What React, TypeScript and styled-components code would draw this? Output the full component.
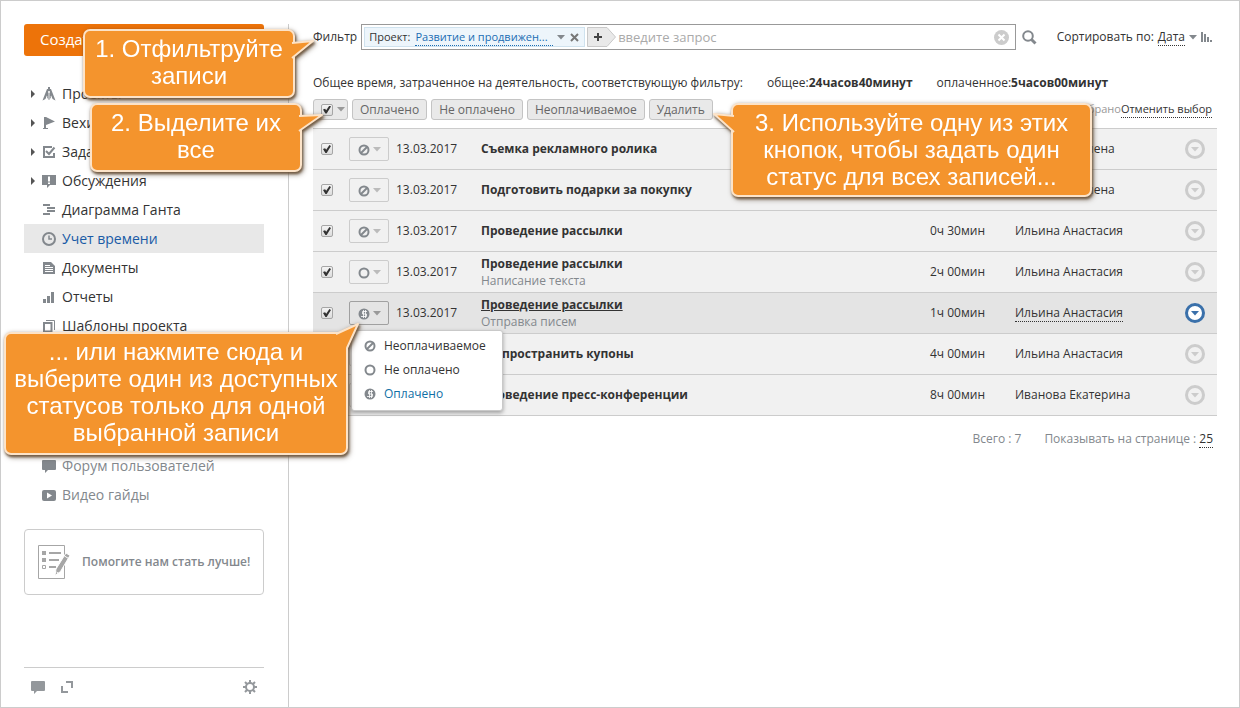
import React from 'react';
import styled, { createGlobalStyle, css } from 'styled-components';

const GlobalStyle = createGlobalStyle`
  *, *::before, *::after { box-sizing: border-box; }
  body {
    margin: 0;
    background: #fff;
    color: #333;
    font: 12px/16px 'Open Sans', sans-serif;
  }
  button, input { font: inherit; color: inherit; }
  button { cursor: pointer; }
  a { color: inherit; text-decoration: none; }
  svg { display: block; flex: none; }
`;

const Page = styled.div`
  position: relative;
  display: flex;
  min-height: 100vh;
  padding-top: 23px;
  border: 1px solid #ccc;
`;

/* ---------- sidebar ---------- */

const Sidebar = styled.aside`
  display: flex;
  flex-direction: column;
  flex: none;
  width: 288px;
  padding: 0 24px 0 23px;
  border-right: 1px solid #ccc;
`;

const CreateButton = styled.button`
  height: 32px;
  padding: 0 16px 2px;
  border: 0;
  border-radius: 3px;
  background: #ed7309;
  color: #fff;
  font-size: 15px;
  text-align: left;
`;

const NavList = styled.ul<{ $gap: number }>`
  margin: ${p => p.$gap}px 0 0;
  padding: 0;
  list-style: none;
`;

const NavLink = styled.a<{ $active?: boolean; $muted?: boolean }>`
  display: grid;
  grid-template-columns: 11px 20px 1fr;
  align-items: center;
  height: 29px;
  padding-left: 7px;
  background: ${p => (p.$active ? '#e8e8e8' : 'transparent')};
  color: ${p => (p.$active ? '#1a5ba6' : p.$muted ? '#83888d' : '#333')};
  font-size: 14px;
  white-space: nowrap;
`;

const HelpCard = styled.a`
  display: flex;
  align-items: center;
  gap: 12px;
  height: 66px;
  margin-top: 20px;
  padding: 0 13px;
  border: 1px solid #ccc;
  border-radius: 4px;
  color: #83888d;
  font-weight: 600;
  white-space: nowrap;
`;

const SideFooter = styled.footer`
  display: flex;
  align-items: center;
  gap: 15px;
  height: 40px;
  margin-top: auto;
  padding: 0 6px 2px 7px;
  border-top: 1px solid #ccc;
`;

const IconButton = styled.button<{ $end?: boolean }>`
  display: block;
  padding: 0;
  border: 0;
  background: none;
  margin-left: ${p => (p.$end ? 'auto' : '0')};
`;

/* ---------- main column ---------- */

const Main = styled.main`
  flex: 1;
  min-width: 0;
  padding: 0 22px 24px 24px;
`;

const FilterRow = styled.div`
  display: flex;
  align-items: center;
  height: 26px;
`;

const FilterBox = styled.div`
  display: flex;
  align-items: center;
  gap: 2px;
  flex: 1;
  height: 26px;
  margin: 0 6px 0 4px;
  padding: 0 6px 0 2px;
  border: 1px solid #999;
`;

const Chip = styled.div`
  display: flex;
  align-items: center;
  gap: 5px;
  width: 221px;
  height: 20px;
  padding: 0 5px 0 4px;
  border: 1px solid #cfe2ee;
  background: #edf5fb;
  font-size: 11px;
  white-space: nowrap;
`;

const ChipValue = styled.button`
  display: flex;
  align-items: center;
  gap: 4px;
  flex: 1;
  padding: 0;
  border: 0;
  background: none;
  color: #1a6db3;
  text-align: left;
`;

const Dotted = styled.span<{ $wide?: boolean }>`
  padding-right: ${p => (p.$wide ? 5 : 0)}px;
  line-height: 16px;
  border-bottom: 1px dotted currentColor;
`;

const SearchInput = styled.input`
  flex: 1;
  min-width: 0;
  padding: 0;
  border: 0;
  outline: 0;
  background: none;
  font-size: 13px;
  &::placeholder { color: #aaa; opacity: 1; }
`;

const SortBox = styled.div`
  display: flex;
  align-items: center;
  gap: 4px;
  margin-left: 20px;
  padding-right: 4px;
  white-space: nowrap;
`;

const TextButton = styled.button`
  padding: 0;
  border: 0;
  border-bottom: 1px dotted #333;
  background: none;
  line-height: 16px;
  white-space: nowrap;
`;

const Summary = styled.p`
  display: flex;
  gap: 24px;
  height: 18px;
  margin: 24px 0 7px;
  line-height: 18px;
  white-space: nowrap;
`;

const Actions = styled.div`
  display: flex;
  align-items: center;
  gap: 4px;
  margin-bottom: 8px;
`;

const buttonFace = css`
  height: 21px;
  border: 1px solid #c4c4c4;
  border-radius: 3px;
  background: #e9e9e9;
`;

const SelectAll = styled.div`
  ${buttonFace}
  display: flex;
  align-items: center;
  gap: 4px;
  width: 35px;
  padding-left: 7px;
`;

const ActionButton = styled.button`
  ${buttonFace}
  padding: 0 7px;
  color: #666;
  line-height: 19px;
  white-space: nowrap;
`;

const Selection = styled.div`
  display: flex;
  margin-left: auto;
  padding-right: 5px;
  color: #999;
  font-size: 11px;
  white-space: nowrap;
  button { color: #333; }
`;

const Check = styled.input`
  display: block;
  appearance: none;
  position: relative;
  flex: none;
  width: 12px;
  height: 12px;
  margin: 0;
  border: 1px solid #a6a6a6;
  border-radius: 2px;
  background: linear-gradient(#f4f4f4, #dcdcdc);
  &:checked::after {
    content: '';
    position: absolute;
    inset: 1px;
    background: #333;
    clip-path: polygon(0 50%, 26% 40%, 40% 58%, 80% 0, 100% 14%, 46% 100%, 30% 100%);
  }
`;

const Table = styled.table`
  width: 100%;
  table-layout: fixed;
  border-spacing: 0;
  border-top: 1px solid #ccc;
`;

const Row = styled.tr<{ $active?: boolean }>`
  background: ${p => (p.$active ? '#e4e4e4' : '#f1f1f1')};
`;

const Cell = styled.td`
  position: relative;
  height: 41px;
  padding: 0;
  border-bottom: 1px solid #ccc;
  vertical-align: middle;
  white-space: nowrap;
`;

const CheckCell = styled(Cell)`
  padding-left: 8px;
`;

const StatusButton = styled.button<{ $active?: boolean }>`
  display: flex;
  align-items: center;
  gap: 3px;
  width: 40px;
  height: 24px;
  padding: 1px 0 0 8px;
  border: 1px solid ${p => (p.$active ? '#a0a0a0' : '#ccc')};
  border-radius: 2px;
  background: transparent;
`;

const Title = styled.a<{ $active?: boolean }>`
  display: block;
  line-height: 16px;
  font-weight: 700;
  text-decoration: ${p => (p.$active ? 'underline' : 'none')};
`;

const Note = styled.div`
  line-height: 17px;
  color: #83888d;
`;

const Menu = styled.ul`
  position: absolute;
  z-index: 2;
  top: 37px;
  left: 2px;
  width: 152px;
  margin: 0;
  padding: 3px 0 4px;
  border: 1px solid #c9c9c9;
  border-radius: 3px;
  background: #fff;
  box-shadow: 0 2px 4px rgba(0, 0, 0, 0.35);
  list-style: none;
`;

const MenuItem = styled.button<{ $active?: boolean }>`
  display: flex;
  align-items: center;
  gap: 8px;
  width: 100%;
  height: 24px;
  padding: 0 12px;
  border: 0;
  background: none;
  color: ${p => (p.$active ? '#116fa6' : '#333')};
`;

const Pager = styled.div`
  display: flex;
  justify-content: flex-end;
  gap: 23px;
  margin-top: 15px;
  padding-right: 4px;
  color: #83888d;
  button { color: #333; }
`;

/* ---------- callouts ---------- */

const Bubble = styled.div<{ $x: number; $y: number; $w: number; $h: number }>`
  position: absolute;
  z-index: 3;
  left: ${p => p.$x}px;
  top: ${p => p.$y}px;
  width: ${p => p.$w}px;
  height: ${p => p.$h}px;
  padding-top: 4px;
  border: 2px solid #fce3c8;
  border-radius: 7px;
  background: #f4942d;
  color: #fff;
  font: 24px/27px 'Liberation Sans', Arial, sans-serif;
  text-align: center;
  white-space: nowrap;
  filter: drop-shadow(1px 2px 1px rgba(110, 85, 60, 0.9)) drop-shadow(1px 1px 2px rgba(60, 40, 20, 0.5));
`;

const Tail = styled.svg<{ $x: number; $y: number }>`
  position: absolute;
  left: ${p => p.$x}px;
  top: ${p => p.$y}px;
  overflow: visible;
`;

type CalloutProps = {
  x: number; y: number; w: number; h: number;
  lines: string[];
  tail: { x: number; y: number; d: string };
};

const Callout = ({ x, y, w, h, lines, tail }: CalloutProps) => (
  <Bubble $x={x} $y={y} $w={w} $h={h} role="note">
    <Tail $x={tail.x} $y={tail.y} width="26" height="24" aria-hidden="true">
      <path d={tail.d} fill="#f4942d" stroke="#fce3c8" strokeWidth="2" strokeLinejoin="round" />
    </Tail>
    {lines.map(line => <div key={line}>{line}</div>)}
  </Bubble>
);

/* ---------- icons ---------- */

const grey = '#83888d';

const Caret = ({ color = '#999' }: { color?: string }) => (
  <svg width="8" height="5" fill={color}><path d="M0 0h8L4 4.5z" /></svg>
);

const Arrow = () => (
  <svg width="5" height="8" fill="#555"><path d="M0 0L4 4L0 8z" /></svg>
);

const icons: Record<string, React.ReactNode> = {
  projects: (
    <g>
      <path d="M6 0h2v2H6z" />
      <path d="M5 2h4l4.500 11.500-3-1.500L8.500 7h-3l-2 5-3 1.500z" />
      <path d="M5 7h4v3.500L7 13 5 10.500z" />
      <path d="M7 6v6M5.200 9.500L4 12.500M8.800 9.500l1.200 3" stroke="#fff" strokeWidth=".8" />
      <circle cx="7" cy="5" r="1" fill="#fff" />
    </g>
  ),
  milestones: <path d="M2 1h2l9 4.500L4 9v3h2v1H1v-1h1z" />,
  tasks: (
    <g fill="none" stroke={grey} strokeWidth="2">
      <path d="M10 2H2v10h10V8" /><path d="M4 6l3 3 5.500-6.500" />
    </g>
  ),
  talks: <g><path d="M0 1h14v10H8l-3 3v-3H0z" /><path d="M6 2.500h2v5H6zM6 8.500h2v1.500H6z" fill="#fff" /></g>,
  gantt: <path d="M1 1h7v2H1zM5 4h8v2H5zM5 7h8v2H5zM1 10h7v2H1z" />,
  time: (
    <g fill="none" stroke={grey}>
      <circle cx="7" cy="7" r="6" strokeWidth="2" /><path d="M7 3.500V7h3" strokeWidth="1.500" />
    </g>
  ),
  docs: <g><path d="M1 1h8l4 4v8H1z" /><path d="M3 4.500h5M3 6.500h8M3 8.500h8M3 10.500h8" stroke="#fff" /></g>,
  reports: <path d="M1 9h3v4H1zM5 6h3v7H5zM9 2h3v11H9z" />,
  templates: (
    <g fill="none" stroke={grey}>
      <path d="M4 1.500h8.500V11" /><path d="M2 4h7.500v8.500H2z" strokeWidth="2" />
    </g>
  ),
  forum: <path d="M1 1h12q1 0 1 1v8q0 1-1 1H6l-3 3v-3H1q-1 0-1-1V2q0-1 1-1z" />,
  video: <g><rect y="2" width="14" height="11" rx="2" /><path d="M5 4.500v6l5-3z" fill="#fff" /></g>,
};

const Glyph = ({ name, color = grey }: { name: string; color?: string }) => (
  <svg width="14" height="14" fill={color} aria-hidden="true">{icons[name]}</svg>
);

const StatusIcon = ({ kind }: { kind: string }) => (
  <svg width="12" height="12" fill="none" stroke={grey} strokeWidth="2" aria-hidden="true">
    {kind === 'paid' ? (
      <g stroke="none">
        <circle cx="6" cy="6" r="5.500" fill={grey} />
        <path
          d="M9 3.500H4.500V6h4v2.500H3M5.500 2v8M7.500 2v8"
          stroke="#fff" strokeWidth="1" strokeOpacity=".8" />
      </g>
    ) : <circle cx="6" cy="6" r="4.500" />}
    {kind === 'free' && <path d="M3 9l6-6" />}
  </svg>
);

const MoreIcon = ({ active }: { active?: boolean }) => {
  const color = active ? '#3a70aa' : '#ccc';
  return (
    <svg width="20" height="20" aria-hidden="true">
      <circle cx="10" cy="10" r="8.500" fill={active ? '#fff' : 'none'} stroke={color} strokeWidth="3" />
      <path d="M6 8h8l-4 4.500z" fill={color} />
    </svg>
  );
};

/* ---------- data ---------- */

const nav = [
  { icon: 'projects', label: 'Проекты', tree: true },
  { icon: 'milestones', label: 'Вехи', tree: true },
  { icon: 'tasks', label: 'Задачи', tree: true },
  { icon: 'talks', label: 'Обсуждения', tree: true },
  { icon: 'gantt', label: 'Диаграмма Ганта' },
  { icon: 'time', label: 'Учет времени', active: true },
  { icon: 'docs', label: 'Документы' },
  { icon: 'reports', label: 'Отчеты' },
  { icon: 'templates', label: 'Шаблоны проекта' },
];

const support = [
  { icon: 'forum', label: 'Форум пользователей' },
  { icon: 'video', label: 'Видео гайды' },
];

const statuses = [
  { kind: 'free', label: 'Неоплачиваемое' },
  { kind: 'open', label: 'Не оплачено' },
  { kind: 'paid', label: 'Оплачено' },
];

const records = [
  { status: 'free', title: 'Съемка рекламного ролика', time: '5ч 10мин', who: 'Васильева Елена' },
  { status: 'free', title: 'Подготовить подарки за покупку', time: '4ч 00мин', who: 'Васильева Елена' },
  { status: 'free', title: 'Проведение рассылки', time: '0ч 30мин', who: 'Ильина Анастасия' },
  { status: 'open', title: 'Проведение рассылки', note: 'Написание текста', time: '2ч 00мин', who: 'Ильина Анастасия' },
  { status: 'paid', title: 'Проведение рассылки', note: 'Отправка писем', time: '1ч 00мин', who: 'Ильина Анастасия', active: true },
  { status: 'open', title: 'Распространить купоны', time: '4ч 00мин', who: 'Ильина Анастасия' },
  { status: 'paid', title: 'Проведение пресс-конференции', time: '8ч 00мин', who: 'Иванова Екатерина' },
];

export default function App() {
  return (
    <Page>
      <GlobalStyle />
      <Sidebar>
        <CreateButton>Создать</CreateButton>
        <nav>
          <NavList $gap={23}>
            {nav.map(item => (
              <li key={item.label}>
                <NavLink href="#" $active={item.active}>
                  <span>{item.tree && <Arrow />}</span>
                  <Glyph name={item.icon} />
                  {item.label}
                </NavLink>
              </li>
            ))}
          </NavList>
          <NavList $gap={111}>
            {support.map(item => (
              <li key={item.label}>
                <NavLink href="#" $muted>
                  <span />
                  <Glyph name={item.icon} />
                  {item.label}
                </NavLink>
              </li>
            ))}
          </NavList>
        </nav>
        <HelpCard href="#">
          <svg width="32" height="34" aria-hidden="true">
            <path d="M.5.5h26v33H.5z" fill="#fff" stroke="#a6a6a6" />
            <path d="M4 6h4v4H4zM4 13h4v4H4z" fill="#a6a6a6" />
            <path d="M4.500 20.500h3v3h-3z" fill="none" stroke="#a6a6a6" />
            <path d="M11 8h12M11 15h10M11 22h7" stroke="#a6a6a6" strokeWidth="2" />
            <path d="M17 30.500l1-6.500L28 8l4 2.500-9.500 16z" fill="#a6a6a6" stroke="#fff" />
            <path d="M26.500 11l4.500 2.800M18.500 27l1.500 1" stroke="#fff" />
          </svg>
          Помогите нам стать лучше!
        </HelpCard>
        <SideFooter>
          <IconButton aria-label="Обратная связь"><Glyph name="forum" color="#94989c" /></IconButton>
          <IconButton aria-label="Развернуть">
            <svg width="14" height="14" fill="none" stroke="#94989c" strokeWidth="2">
              <path d="M6 2h6v6M2 6v6h6" />
            </svg>
          </IconButton>
          <IconButton aria-label="Настройки" $end>
            <svg width="16" height="16" viewBox="-8 -8 16 16" fill="none" stroke="#94989c" strokeWidth="2">
              <circle r="4" />
              <path d="M0-7v3M0 4V7M-7 0h3M4 0H7M-5-5l2 2M3 3L5 5M-5 5l2-2M3-3L5-5" />
            </svg>
          </IconButton>
        </SideFooter>
      </Sidebar>

      <Main>
        <FilterRow>
          <label htmlFor="query">Фильтр</label>
          <FilterBox>
            <Chip>
              <span>Проект:</span>
              <ChipValue><Dotted $wide>Развитие и продвижен...</Dotted><Caret color="#83888d" /></ChipValue>
              <IconButton aria-label="Убрать фильтр">
                <svg width="9" height="9" stroke="#777" strokeWidth="2"><path d="M1 1l7 7M8 1L1 8" /></svg>
              </IconButton>
            </Chip>
            <IconButton aria-label="Добавить фильтр">
              <svg width="29" height="20">
                <path d="M.5.500H20l8.500 9.500-8.500 9.500H.5z" fill="#e9e9e9" stroke="#c9c9c9" />
                <path d="M7 10h8M11 6v8" stroke="#444" strokeWidth="2" />
              </svg>
            </IconButton>
            <SearchInput id="query" type="text" placeholder="введите запрос" />
            <IconButton aria-label="Очистить">
              <svg width="15" height="15">
                <circle cx="7.500" cy="7.500" r="7.500" fill="#ccc" />
                <path d="M4.500 4.500l6 6M10.500 4.500l-6 6" stroke="#fff" strokeWidth="2" />
              </svg>
            </IconButton>
          </FilterBox>
          <IconButton aria-label="Найти">
            <svg width="15" height="15" fill="none" stroke={grey} strokeWidth="2">
              <circle cx="6" cy="6" r="4.800" /><path d="M9.500 9.500l4 4" strokeWidth="3" />
            </svg>
          </IconButton>
          <SortBox>
            <span>Сортировать по:</span>
            <TextButton>Дата</TextButton>
            <Caret color="#83888d" />
            <IconButton aria-label="Порядок">
              <svg width="12" height="10" fill={grey}><path d="M0 0h2v10H0zM3 2h2v8H3zM6 5h2v5H6zM9 8h2v2H9z" /></svg>
            </IconButton>
          </SortBox>
        </FilterRow>

        <Summary>
          <span>Общее время, затраченное на деятельность, соответствующую фильтру:</span>
          <span>общее:<b>24часов40минут</b></span>
          <span>оплаченное:<b>5часов00минут</b></span>
        </Summary>

        <Actions>
          <SelectAll>
            <Check type="checkbox" defaultChecked aria-label="Выбрать все" />
            <Caret />
          </SelectAll>
          <ActionButton>Оплачено</ActionButton>
          <ActionButton>Не оплачено</ActionButton>
          <ActionButton>Неоплачиваемое</ActionButton>
          <ActionButton>Удалить</ActionButton>
          <Selection>7 выбрано<TextButton>Отменить выбор</TextButton></Selection>
        </Actions>

        <Table>
          <colgroup>
            <col width="36" /><col width="47" /><col width="85" /><col />
            <col width="85" /><col width="170" /><col width="32" />
          </colgroup>
          <tbody>
            {records.map((r, i) => (
              <Row key={i} $active={r.active}>
                <CheckCell><Check type="checkbox" defaultChecked aria-label={r.title} /></CheckCell>
                <Cell>
                  <StatusButton $active={r.active} aria-haspopup="menu" aria-label="Статус">
                    <StatusIcon kind={r.status} />
                    <Caret color={r.active ? '#999' : '#bbb'} />
                  </StatusButton>
                  {r.active && (
                    <Menu>
                      {statuses.map(s => (
                        <li key={s.kind}>
                          <MenuItem $active={s.kind === r.status}><StatusIcon kind={s.kind} />{s.label}</MenuItem>
                        </li>
                      ))}
                    </Menu>
                  )}
                </Cell>
                <Cell>13.03.2017</Cell>
                <Cell>
                  <Title href="#" $active={r.active}>{r.title}</Title>
                  {r.note && <Note>{r.note}</Note>}
                </Cell>
                <Cell>{r.time}</Cell>
                <Cell>{r.active ? <Dotted>{r.who}</Dotted> : r.who}</Cell>
                <Cell><IconButton aria-label="Действия"><MoreIcon active={r.active} /></IconButton></Cell>
              </Row>
            ))}
          </tbody>
        </Table>

        <Pager>
          <span>Всего : 7</span>
          <span>Показывать на странице : <TextButton>25</TextButton></span>
        </Pager>
      </Main>

      <Callout x={82} y={28} w={212} h={69} lines={['1. Отфильтруйте', 'записи']}
        tail={{ x: 207, y: 9, d: 'M0 3L21 1L0 18' }} />
      <Callout x={89} y={102} w={212} h={69} lines={['2. Выделите их', 'все']}
        tail={{ x: 207, y: 10, d: 'M0 1L23 0L0 16' }} />
      <Callout x={730} y={102} w={361} h={94}
        lines={['3. Используйте одну из этих', 'кнопок, чтобы задать один', 'статус для всех записей...']}
        tail={{ x: -19, y: 9, d: 'M20 2L0 0L20 18' }} />
      <Callout x={3} y={331} w={344} h={123}
        lines={['... или нажмите сюда и', 'выберите один из доступных', 'статусов только для одной', 'выбранной записи']}
        tail={{ x: 330, y: -10, d: 'M0 10L22 0L11 24' }} />
    </Page>
  );
}
